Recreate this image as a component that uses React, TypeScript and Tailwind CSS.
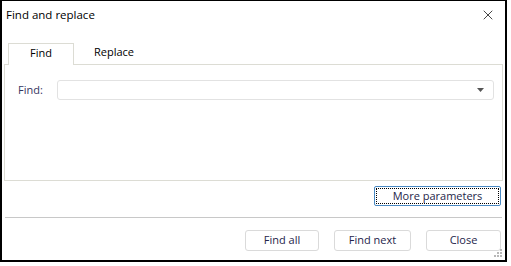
import { X } from "lucide-react";

function Btn({ label, focused = false, w }: { label: string; focused?: boolean; w: string }) {
  if (focused) {
    return (
      <button
        type="button"
        className={`${w} h-[20px] rounded-[2px] border border-[#4a8ac4] bg-white p-[1px] text-[11px] text-[#25254a]`}
      >
        <span className="flex h-full w-full items-center justify-center border border-dotted border-black">
          {label}
        </span>
      </button>
    );
  }
  return (
    <button
      type="button"
      className={`${w} flex h-[21px] items-center justify-center rounded-[3px] border border-[#dadada] bg-white text-[11px] text-[#25254a]`}
    >
      {label}
    </button>
  );
}

function Grip() {
  const dots = [
    [6, 0],
    [3, 3],
    [6, 3],
    [0, 6],
    [3, 6],
    [6, 6],
  ];
  return (
    <svg width="9" height="9" viewBox="0 0 9 9" className="absolute bottom-[2px] right-[2px]">
      {dots.map(([x, y]) => (
        <rect key={`${x}-${y}`} x={x} y={y} width="2" height="2" fill="#b8b8b8" />
      ))}
    </svg>
  );
}

export default function App() {
  return (
    <div className="h-[266px] w-[511px] bg-white" style={{ fontFamily: '"Open Sans", "Noto Sans", sans-serif' }}>
      <div className="relative flex h-[262px] w-[507px] flex-col border-x-2 border-b-2 border-t border-black bg-white">
        {/* title bar */}
        <div className="flex h-[27px] items-center justify-between pl-[4px] pr-[9px]">
          <span className="text-[11.5px] text-black">Find and replace</span>
          <X size={16} strokeWidth={1.1} className="text-black" />
        </div>

        {/* tabs */}
        <div className="mt-[14px] flex h-[22px] items-end pl-[6px] text-[11px] text-black">
          <div className="relative z-10 -mb-px flex h-[22px] w-[66px] items-center justify-center border border-b-0 border-[#dcdcd4] bg-white pb-[2px]">
            Find
          </div>
          <div className="flex h-[22px] w-[80px] items-center justify-center pb-[2px]">Replace</div>
        </div>

        {/* panel */}
        <div className="mx-[2px] h-[117px] border border-[#dcdcd4] pl-[13px] pr-[8px] pt-[15px]">
          <div className="flex items-center">
            <span className="w-[39px] text-[11px] text-[#36365e]">Find:</span>
            <div className="flex h-[20px] flex-1 items-center justify-end rounded-[3px] border border-[#e2e2e2] pr-[9px]">
              <svg width="7" height="4" viewBox="0 0 7 4">
                <path d="M0 0h7L3.5 4z" fill="#555" />
              </svg>
            </div>
          </div>
        </div>

        <div className="mt-[5px] flex justify-end pr-[4px]">
          <Btn label="More parameters" focused w="w-[127px]" />
        </div>

        <div className="mx-[3px] mt-[11px] h-px bg-[#c8c8c8]" />

        <div className="mt-[12px] flex justify-end gap-[15px] pr-[4px]">
          <Btn label="Find all" w="w-[74px]" />
          <Btn label="Find next" w="w-[77px]" />
          <Btn label="Close" w="w-[75px]" />
        </div>

        <Grip />
      </div>
    </div>
  );
}
